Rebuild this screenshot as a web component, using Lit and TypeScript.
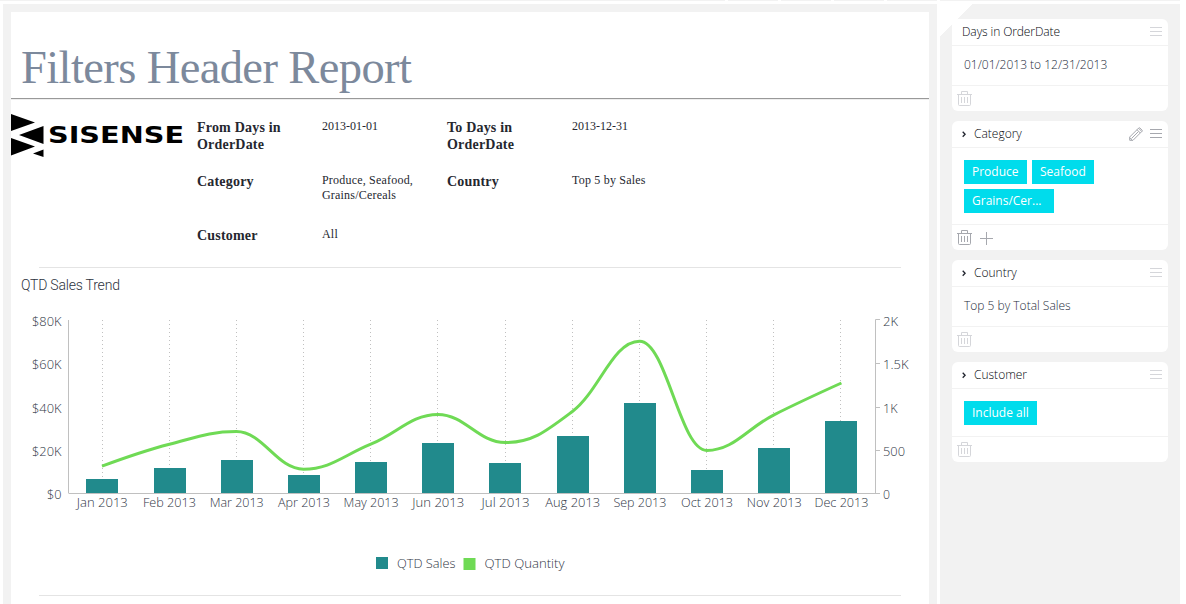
import { LitElement, html, svg, css, nothing } from "lit";
import { customElement, property } from "lit/decorators.js";
import { classMap } from "lit/directives/class-map.js";

const MONTHS = ["Jan", "Feb", "Mar", "Apr", "May", "Jun", "Jul", "Aug", "Sep", "Oct", "Nov", "Dec"];
const BAR_X = [86, 154, 221, 288, 355, 422, 489, 557, 624, 691, 758, 825];
const BAR_TOP = [479, 468, 460, 475, 462, 443, 463, 436, 403, 470, 448, 421];
const GRID_X = [102, 169, 236, 303, 370, 437, 505, 572, 639, 706, 773, 840];
const LABEL_W = [51, 53, 54, 52, 55, 52, 48, 55, 53, 52, 55, 54];
const QTY: [number, number][] = [
  [102, 466.2], [169.4, 444.3], [236.4, 431.6], [303.6, 469.2], [370.8, 444.2], [438, 414.4],
  [505.2, 442.6], [572.4, 411.5], [639.6, 341.2], [706.8, 450.4], [774, 414.8], [841.4, 383],
];

// Smooth spline whose control points never overshoot the neighbouring values.
function spline(p: [number, number][]): string {
  let d = `M${p[0][0]} ${p[0][1]}`;
  let rx = p[0][0];
  let ry = p[0][1];
  for (let i = 1; i < p.length; i++) {
    const [x, y] = p[i];
    let lx = x, ly = y, nrx = x, nry = y;
    if (i < p.length - 1) {
      const [ax, ay] = p[i - 1];
      const [bx, by] = p[i + 1];
      lx = (1.5 * x + ax) / 2.5;
      ly = (1.5 * y + ay) / 2.5;
      nrx = (1.5 * x + bx) / 2.5;
      nry = (1.5 * y + by) / 2.5;
      const c = ((nry - ly) * (nrx - x)) / (nrx - lx) + y - nry;
      ly += c;
      nry += c;
      if (ly > ay && ly > y) { ly = Math.max(ay, y); nry = 2 * y - ly; }
      else if (ly < ay && ly < y) { ly = Math.min(ay, y); nry = 2 * y - ly; }
      if (nry > by && nry > y) { nry = Math.max(by, y); ly = 2 * y - nry; }
      else if (nry < by && nry < y) { nry = Math.min(by, y); ly = 2 * y - nry; }
    }
    d += `C${rx} ${ry} ${lx} ${ly} ${x} ${y}`;
    rx = nrx;
    ry = nry;
  }
  return d;
}

@customElement("sales-chart")
export class SalesChart extends LitElement {
  static styles = css`
    :host { display: block; }
    svg { display: block; }
    text { font: 300 13px "Open Sans", "Noto Sans", sans-serif; fill: #2f3645; }
    .bar { fill: #218a8c; }
    .grid { stroke: #c0c0c0; stroke-dasharray: 1 3; }
    .axis { stroke: #c0c0c0; fill: none; }
    .qty { stroke: #6fda55; stroke-width: 3; fill: none; stroke-linejoin: round; }
    .qty-key { fill: #6fda55; }
  `;
  render() {
    const left: [string, number, number][] = [["$80K", 326, 29.5], ["$60K", 369, 29.5], ["$40K", 413, 29.5], ["$20K", 456, 29.5], ["$0", 499, 14.5]];
    const right: [string, number, number][] = [["2K", 326, 15], ["1.5K", 369, 25.5], ["1K", 413, 14.5], ["500", 456, 22], ["0", 499, 7]];
    return html`<svg width="918" height="289" viewBox="11 301 918 289">
      ${GRID_X.map((x) => svg`<line class="grid" x1=${x + 0.5} x2=${x + 0.5} y1="320" y2="493"></line>`)}
      ${BAR_X.map((x, i) => svg`<rect class="bar" x=${x} y=${BAR_TOP[i]} width="32" height=${493 - BAR_TOP[i]}></rect>`)}
      <path class="axis" d="M68.5 320V493.5M69 493.5H880M880 319.5H875.5V493.5M875.5 363.5H880M875.5 407.5H880M875.5 450.5H880"></path>
      <path class="qty" d=${spline(QTY)}></path>
      ${left.map(([t, y, w]) => svg`<text x=${61.5 - w} y=${y} textLength=${w} lengthAdjust="spacingAndGlyphs">${t}</text>`)}
      ${right.map(([t, y, w]) => svg`<text x="883" y=${y} textLength=${w} lengthAdjust="spacingAndGlyphs">${t}</text>`)}
      ${MONTHS.map((m, i) => svg`<text x=${102.3 + 67.2 * i - LABEL_W[i] / 2} y="507" textLength=${LABEL_W[i]} lengthAdjust="spacingAndGlyphs">${m} 2013</text>`)}
      <rect class="bar" x="376" y="557" width="12" height="12"></rect>
      <text x="397" y="568" textLength="58.5" lengthAdjust="spacingAndGlyphs">QTD Sales</text>
      <rect class="qty-key" x="463.5" y="558" width="12" height="12"></rect>
      <text x="484.5" y="568" textLength="80" lengthAdjust="spacingAndGlyphs">QTD Quantity</text>
    </svg>`;
  }
}

@customElement("filter-card")
export class FilterCard extends LitElement {
  @property() name = "";
  @property() value = "";
  @property({ type: Array }) tags: string[] = [];
  @property({ type: Boolean }) expandable = false;
  @property({ type: Boolean }) active = false;

  static styles = css`
    :host { display: block; font: 300 12px/16px "Open Sans", "Noto Sans", sans-serif; color: #252c3c; }
    .card { background: #fff; border-radius: 6px; }
    .head { display: flex; align-items: center; height: 26px; padding: 0 6px 0 10px; border-bottom: 1px solid #f2f2f2; color: #05070d; }
    .name { flex: 1; letter-spacing: -0.1px; }
    .expandable .name { letter-spacing: 0; }
    .tools { display: flex; gap: 7px; color: #d5d6da; }
    .active .tools, .active .foot { color: #a6a8ae; }
    .body { padding: 11px 12px 12px; }
    .body.chips { padding: 12px 12px 11px; }
    .tags { display: flex; flex-wrap: wrap; gap: 5px; }
    .tag { height: 24px; line-height: 24px; padding: 0 8px; background: #00dcec; color: #fff; font-weight: 400; white-space: nowrap; box-sizing: border-box; }
    .foot { display: flex; gap: 8px; border-top: 1px solid #f2f2f2; height: 26px; padding: 1px 0 0 5px; color: #d5d6da; align-items: center; box-sizing: border-box; }
    svg { display: block; fill: none; stroke: currentColor; flex: none; }
    .chevron { width: 12px; height: 10px; stroke: #20242e; stroke-width: 1.3; }
  `;
  private widths: Record<string, number> = { Produce: 63, Seafood: 62, "Grains/Cer...": 90, "Include all": 73 };

  render() {
    return html`<div class=${classMap({ card: true, active: this.active, expandable: this.expandable })}>
      <div class="head">
        ${this.expandable ? html`<svg class="chevron" viewBox="0 0 12 10"><path d="M0.7 2.7L3.1 5.2L0.7 7.7"></path></svg>` : nothing}
        <span class="name">${this.name}</span>
        <span class="tools">
          ${this.active ? html`<svg width="14" height="14" viewBox="0 0 14 14"><path d="M0.7 13.3V10L9.8 0.9Q10.3 0.5 10.8 0.9L13.1 3.2Q13.5 3.7 13.1 4.2L4 13.3ZM8 2.7L11.3 6M9.5 1.2L12.8 4.5M9.3 4.7L2.5 11.5M0.7 10.8L3.2 13.3"></path></svg>` : nothing}
          <svg width="12" height="14" viewBox="0 0 12 14"><path d="M0 2.5H12M0 6.5H12M0 10.5H12"></path></svg>
        </span>
      </div>
      <div class=${classMap({ body: true, chips: this.tags.length > 0 })}>
        ${this.tags.length
          ? html`<div class="tags">${this.tags.map((t) => html`<span class="tag" style="width:${this.widths[t]}px">${t}</span>`)}</div>`
          : html`<div class="value">${this.value}</div>`}
      </div>
      <div class="foot">
        <svg width="15" height="16" viewBox="0 0 15 16"><path d="M0 3.5H15M4.5 3V0.5H10.5V3M1.5 4V13.5Q1.5 14.5 2.5 14.5H12.5Q13.5 14.5 13.5 13.5V4M4.5 6V12M7.5 6V12M10.5 6V12"></path></svg>
        ${this.active ? html`<svg width="13" height="14" viewBox="0 0 13 14"><path d="M0 7.5H13M6.5 1V14"></path></svg>` : nothing}
      </div>
    </div>`;
  }
}

@customElement("app-root")
export class AppRoot extends LitElement {
  static styles = css`
    :host { display: block; width: 1186px; height: 604px; overflow: hidden; background: #fff; }
    .strip { display: grid; grid-template-columns: 725px 50px 50px 50px 50px 1fr; column-gap: 3px; height: 1px; margin-right: 6px; }
    .strip i { background: #f2f2f2; }
    .layout { display: flex; gap: 3px; margin: 3px 6px 0 3px; height: 600px; }
    .canvas { width: 934px; box-sizing: border-box; background: #f2f2f2; padding: 8px 8px 0; }
    .page { background: #fff; height: 592px; overflow: hidden; font-family: "Liberation Serif", serif; }
    h1 { margin: 0; padding: 28px 0 0 10px; height: 58px; line-height: 56px; font-size: 46.5px; font-weight: 400; color: #7c899c; white-space: nowrap; letter-spacing: -0.6px; }
    .rule { height: 1px; background: #999; border-bottom: 1px solid #eee; }
    .summary { display: flex; height: 167px; }
    .logo { display: block; margin-top: 13px; width: 186px; height: 46px; flex: none; }
    .logo text { font: 700 23.5px "DejaVu Sans", sans-serif; }
    .fields { display: grid; grid-template-columns: repeat(4, 125px); grid-auto-rows: 54px; padding-top: 19px; color: #25272f; }
    .label { font-weight: 700; font-size: 14px; line-height: 17px; letter-spacing: 0.2px; }
    .val { font-size: 12px; line-height: 15px; }
    .val.words { letter-spacing: 0.2px; }
    .sep { height: 1px; background: #e4e4e4; margin: 0 28px; }
    .title { height: 33px; line-height: 35px; padding-left: 10px; font-family: Roboto, sans-serif; font-weight: 300; font-size: 14px; letter-spacing: -0.2px; color: #2c3240; box-sizing: border-box; }
    .after { margin-top: 5px; }
    .panel { width: 240px; box-sizing: border-box; padding: 15px 12px 0; display: flex; flex-direction: column; gap: 10px; background: linear-gradient(135deg, #fff 0 23px, #f2f2f2 23px); }
  `;
  render() {
    const fields: [string, string][] = [
      ["From Days in OrderDate", "2013-01-01"], ["To Days in OrderDate", "2013-12-31"],
      ["Category", "Produce, Seafood, Grains/Cereals"], ["Country", "Top 5 by Sales"], ["Customer", "All"],
    ];
    return html`
      <div class="strip"><i></i><i></i><i></i><i></i><i></i><i></i></div>
      <div class="layout">
        <main class="canvas"><div class="page">
          <h1>Filters Header Report</h1>
          <div class="rule"></div>
          <section class="summary">
            <svg class="logo" viewBox="11 113 186 46">
              <path d="M11 114L35 122.5L11 131ZM43.5 126V144L19 135ZM11 138L35 146.5L11 155.5ZM43.5 149.5V157L33 153.5Z"></path>
              <text x="48" y="143" textLength="136" lengthAdjust="spacingAndGlyphs">SISENSE</text>
            </svg>
            <div class="fields">${fields.map(([l, v]) => html`<div class="label">${l}</div><div class=${classMap({ val: true, words: /[a-z]/.test(v) })}>${v}</div>`)}</div>
          </section>
          <div class="sep"></div>
          <div class="title">QTD Sales Trend</div>
          <sales-chart></sales-chart>
          <div class="sep after"></div>
        </div></main>
        <aside class="panel">
          <filter-card name="Days in OrderDate" value="01/01/2013 to 12/31/2013"></filter-card>
          <filter-card name="Category" expandable active .tags=${["Produce", "Seafood", "Grains/Cer..."]}></filter-card>
          <filter-card name="Country" expandable value="Top 5 by Total Sales"></filter-card>
          <filter-card name="Customer" expandable .tags=${["Include all"]}></filter-card>
        </aside>
      </div>`;
  }
}
